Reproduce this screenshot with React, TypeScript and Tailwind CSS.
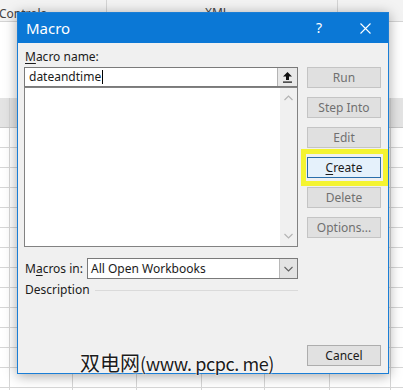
import React from "react";

function Btn({ label, variant = "dim", u }: { label: string; variant?: "dim" | "normal" | "primary"; u?: number }) {
  const cls =
    variant === "primary"
      ? "bg-[#e5f1fb] border-[#2a6eaa] text-[#1b1b1b]"
      : variant === "normal"
      ? "bg-[#e1e1e1] border-[#adadad] text-[#1b1b1b]"
      : "bg-[#e0e0e0] border-[#c4c4c4] text-[#707070]";
  return (
    <div className={`h-[21px] w-[74px] border flex items-center justify-center text-[12px] leading-none ${cls}`}>
      {u === undefined ? (
        label
      ) : (
        <span>
          {label.slice(0, u)}
          <span className="underline underline-offset-2">{label[u]}</span>
          {label.slice(u + 1)}
        </span>
      )}
    </div>
  );
}

function GridRow({ header }: { header?: boolean }) {
  return (
    <div
      className={`grid grid-cols-[10px_63px_64px_65px_63px_65px_61px_12px] ${
        header ? "h-[30px] bg-[#e4e4e4] border-b border-[#c8c8c8]" : "h-[20px] border-b border-[#d6d6d6]"
      }`}
    >
      <div className="border-r border-[#d6d6d6]" />
      <div className="border-r border-[#d6d6d6]" />
      <div className="border-r border-[#d6d6d6]" />
      <div className="border-r border-[#d6d6d6]" />
      <div className="border-r border-[#d6d6d6]" />
      <div className="border-r border-[#d6d6d6]" />
      <div className="border-r border-[#d6d6d6]" />
      <div />
    </div>
  );
}

export default function App() {
  const rows = Array.from({ length: 14 }, (_, i) => i);
  return (
    <div className="relative w-[403px] h-[390px] overflow-hidden bg-white font-['Noto_Sans',sans-serif]">
      {/* spreadsheet background */}
      <div className="flex flex-col">
        <div className="h-[22px] flex bg-[#f3f3f3] border-b border-[#d4d4d4] text-[12px] text-[#444]">
          <div className="w-[107px] border-r border-[#d4d4d4] overflow-hidden flex items-end pb-[1px]">
            <span className="-ml-[1px] leading-none">Controls</span>
          </div>
          <div className="w-[231px] border-r border-[#d4d4d4] flex items-end pb-[2px] justify-center">
            <span className="leading-none -ml-[10px]">XML</span>
          </div>
          <div className="flex-1" />
        </div>
        <div className="h-[76px] bg-white" />
        <GridRow header />
        {rows.map((r) => (
          <GridRow key={r} />
        ))}
      </div>

      {/* dialog window */}
      <div className="absolute left-[17px] top-[12px] w-[372px] h-[362px] border border-[#1a7ed6] bg-[#f0f0f0] shadow-[0_2px_12px_rgba(0,0,0,0.35)] flex flex-col text-[#1b1b1b]">
        <div className="h-[30px] bg-[#0b78d6] flex items-center text-white shrink-0">
          <div className="pl-[8px] text-[15px] leading-none flex-1">Macro</div>
          <div className="w-[46px] h-full flex items-center justify-center text-[14px] leading-none">?</div>
          <div className="w-[46px] h-full flex items-center justify-center">
            <svg width="11" height="11" viewBox="0 0 11 11">
              <path d="M0.5 0.5 L10.5 10.5 M10.5 0.5 L0.5 10.5" stroke="white" strokeWidth="1.1" />
            </svg>
          </div>
        </div>

        <div className="flex-1 flex pl-[6px] pr-[7px] pb-[7px] gap-[9px]">
          {/* left column */}
          <div className="w-[274px] flex flex-col text-[12px]">
            <div className="h-[24px] pt-[6px] leading-[16px] pl-[1px]">
              <span className="underline underline-offset-2">M</span>acro name:
            </div>
            <div className="h-[20px] border border-[#7a7a7a] bg-white flex items-stretch">
              <div className="flex-1 flex items-center pl-[4px] leading-none">
                dateandtime<span className="inline-block w-px h-[14px] bg-black ml-px" />
              </div>
              <div className="w-[20px] bg-[#e8e8e8] border-l border-[#b4b4b4] flex items-center justify-center">
                <svg width="11" height="12" viewBox="0 0 11 12">
                  <path d="M5.5 1 L10 5.5 L7 5.5 L7 9 L4 9 L4 5.5 L1 5.5 Z" fill="#111" />
                  <rect x="1" y="10.5" width="9" height="1.2" fill="#111" />
                </svg>
              </div>
            </div>
            <div className="h-[160px] border border-[#828282] bg-white flex justify-end">
              <div className="w-[17px] bg-[#f0f0f0] flex flex-col items-center justify-between py-[7px]">
                <svg width="9" height="6" viewBox="0 0 9 6">
                  <path d="M0.5 5 L4.5 1 L8.5 5" stroke="#b4b4b4" strokeWidth="1.2" fill="none" />
                </svg>
                <svg width="9" height="6" viewBox="0 0 9 6">
                  <path d="M0.5 1 L4.5 5 L8.5 1" stroke="#b4b4b4" strokeWidth="1.2" fill="none" />
                </svg>
              </div>
            </div>
            <div className="mt-[11px] flex items-center h-[21px]">
              <div className="w-[63px] pl-[1px] leading-none">
                M<span className="underline underline-offset-2">a</span>cros in:
              </div>
              <div className="flex-1 h-full border border-[#7a7a7a] bg-white flex items-stretch">
                <div className="flex-1 flex items-center pl-[3px] leading-none">All Open Workbooks</div>
                <div className="w-[18px] bg-[#e3e3e3] border-l border-[#b8b8b8] flex items-center justify-center">
                  <svg width="9" height="6" viewBox="0 0 9 6">
                    <path d="M0.5 1 L4.5 5 L8.5 1" stroke="#606060" strokeWidth="1.1" fill="none" />
                  </svg>
                </div>
              </div>
            </div>
            <div className="mt-[2px] h-[18px] flex items-center pl-[1px]">
              <span className="leading-none">Description</span>
              <div className="flex-1 h-px bg-[#dadada] ml-[5px]" />
            </div>
          </div>

          {/* button column */}
          <div className="w-[74px] flex flex-col pt-[24px] gap-[9px]">
            <Btn label="Run" />
            <Btn label="Step Into" />
            <Btn label="Edit" />
            <div className="relative">
              <Btn label="Create" variant="primary" u={0} />
              <span className="absolute -left-[6px] -right-[7px] -top-[8px] -bottom-[8px] border-[5px] border-[#f4f431] pointer-events-none" />
            </div>
            <Btn label="Delete" />
            <Btn label="Options..." />
            <div className="mt-auto">
              <Btn label="Cancel" variant="normal" />
            </div>
          </div>
        </div>
      </div>

      {/* watermark */}
      <div className="absolute left-[80px] top-[350px] flex items-baseline leading-[26px] text-[#1c1c1c] font-['Noto_Sans_CJK_SC',sans-serif] [text-shadow:0_0_2px_#fff,0_0_2px_#fff]">
        <span className="text-[20px]">双电网</span>
        <span className="text-[18px] tracking-[-0.4px]">(www. pcpc. me)</span>
      </div>
    </div>
  );
}
